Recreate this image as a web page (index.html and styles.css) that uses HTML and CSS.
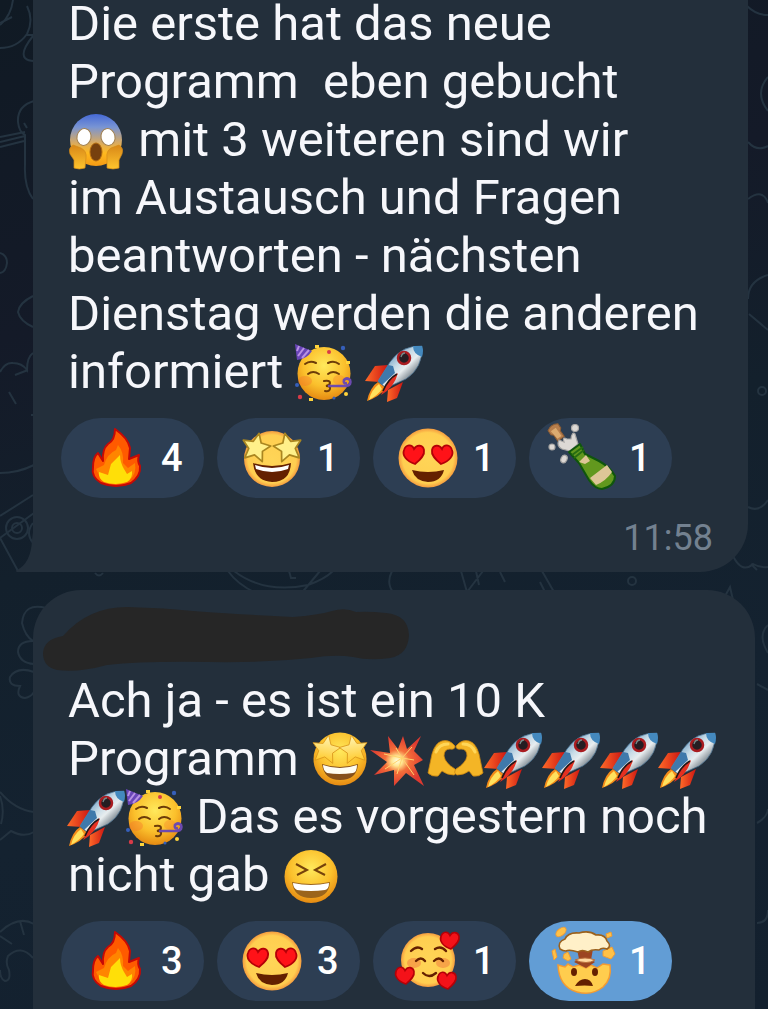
FILE: index.html
```html
<!DOCTYPE html>
<html lang="de">
<head>
<meta charset="utf-8">
<meta name="viewport" content="width=device-width, initial-scale=1">
<title>Chat</title>
<link rel="stylesheet" href="styles.css">
</head>
<body>
<svg class="sprite" aria-hidden="true">
  <defs>
    <radialGradient id="gold" cx=".5" cy=".35" r=".65"><stop offset="0" stop-color="#ffe95c"/><stop offset=".6" stop-color="#fbc02c"/><stop offset="1" stop-color="#e58a12"/></radialGradient>
    <linearGradient id="fear" x2="0" y2="1"><stop offset="0" stop-color="#4569d6"/><stop offset=".25" stop-color="#7894d4"/><stop offset=".55" stop-color="#d8aa62"/><stop offset=".75" stop-color="#ffb91f"/><stop offset="1" stop-color="#f49a14"/></linearGradient>
    <linearGradient id="hand" x2="0" y2="1"><stop offset="0" stop-color="#d88718"/><stop offset="1" stop-color="#ffc52d"/></linearGradient>
    <linearGradient id="hull" x1=".15" y1=".2" x2=".75" y2=".8"><stop offset="0" stop-color="#528bb8"/><stop offset=".45" stop-color="#c9dce7"/><stop offset=".65" stop-color="#e8edef"/><stop offset="1" stop-color="#65727c"/></linearGradient>
    <linearGradient id="fin" x2="1"><stop offset="0" stop-color="#ff6b28"/><stop offset="1" stop-color="#cc1612"/></linearGradient>
    <radialGradient id="boom"><stop offset="0" stop-color="#fffde0"/><stop offset=".2" stop-color="#ffe590"/><stop offset=".45" stop-color="#f4703a"/><stop offset="1" stop-color="#dd3930"/></radialGradient>
    <radialGradient id="flat"><stop offset="0" stop-color="#ffd557"/><stop offset=".86" stop-color="#ffce50"/><stop offset="1" stop-color="#f49b3f"/></radialGradient>
    <linearGradient id="stars" x2="0" y2="1"><stop offset="0" stop-color="#fff6b8"/><stop offset="1" stop-color="#ffc928"/></linearGradient>
    <path id="star" d="M0-15 4-6 14-5 7 2 9 12 0 7-9 12-7 2-14-5-4-6Z"/>
    <path id="heart" d="M1 10C-8 7-12 1-10-4-8-10-2-10 0-5 3-10 9-9 10-4 11 1 7 5 1 10Z"/>
  </defs>

  <symbol id="scream" viewBox="0 0 58 56">
    <circle cx="28" cy="27" r="26" fill="url(#fear)"/>
    <g fill="#fff" stroke="#a2814f"><ellipse cx="16" cy="24" rx="7" ry="8.5" transform="rotate(12 16 24)"/><ellipse cx="40" cy="24" rx="7" ry="8.5" transform="rotate(-12 40 24)"/></g>
    <ellipse cx="28" cy="39" rx="6" ry="9" fill="#76400e" stroke="#b26b11"/>
    <path d="M5 32Q0 35 2 41L6 47 6 55Q11 57 17 55L18 45Q19 38 13 35ZM51 32Q56 35 54 41L51 47 51 55Q45 57 39 55L39 45Q38 38 43 35Z" fill="url(#hand)" stroke="#d28a18" stroke-width=".7"/>
  </symbol>

  <symbol id="party" viewBox="0 0 58 56">
    <circle cx="29" cy="28.5" r="26.5" fill="url(#gold)"/>
    <ellipse cx="10" cy="36" rx="7" ry="5" fill="#f4772d" opacity=".4"/><ellipse cx="44" cy="35" rx="6" ry="5" fill="#f4772d" opacity=".3"/>
    <path d="M0-1 17 6Q12 14 2 15Z" fill="#6945b8"/><path d="M4 1 2 6M9 3 3 11M14 5 7 13" stroke="#b790e4" stroke-width="2"/>
    <g fill="none" stroke="#6d3c08" stroke-width="2" stroke-linecap="round"><path d="M10 19q5-4 11-1M33 18q6-3 11 1M13 29q5-4 11 0M33 29q5-4 11 0M29 36q6-1 6 2 0 2-4 3 5 0 4 3-1 3-5 2"/></g>
    <path d="M33 41 51 41Q57 40 55 35 52 32 49 35 48 39 52 38" fill="none" stroke="#6d4ab0" stroke-width="2.7"/>
    <g fill="#d83b48"><circle cx="34" cy="7" r="2"/><circle cx="5" cy="52" r="2.2"/></g><g fill="#365fba"><circle cx="48" cy="3" r="2.2"/><circle cx="2" cy="40" r="2"/><circle cx="39" cy="53" r="1.5"/></g><g fill="#ffd43b"><path d="M51 16h4v3h-4zM14 53h4v3h-4zM20 0h4v3h-4z"/><circle cx="51" cy="49" r="2"/></g>
  </symbol>

  <symbol id="rocket" viewBox="0 0 58 56">
    <path d="M22 20 9 21-1 36 14 37Z" fill="url(#fin)"/><path d="M22 45 37 37 31 53 21 57Z" fill="url(#fin)"/>
    <path d="M12 37Q4 42 1 56 13 52 20 43Z" fill="#f58b18"/><path d="M13 39Q5 45 3 55 12 50 16 44Z" fill="#ffe15d"/>
    <path d="M56 1Q36 0 24 17L12 36 20 43 40 34Q57 23 56 1Z" fill="url(#hull)" stroke="#426b8c" stroke-width=".7"/>
    <path d="M47 1Q47 9 56 12 58 6 56 1Z" fill="#4489be"/><path d="M22 20 12 36 16 40 29 28 27 21Z" fill="#3f79ab"/>
    <circle cx="38" cy="13" r="6" fill="#241d22" stroke="#a91c20" stroke-width="2.5"/><path d="M35 12q1-4 4-4" fill="none" stroke="#788" stroke-width="1.3"/>
    <path d="M32 28Q22 34 15 50 28 43 32 28Z" fill="#e53020"/><path d="M31 29Q22 34 17 46" fill="none" stroke="#241718" stroke-width="1.7"/>
  </symbol>

  <symbol id="starry" viewBox="0 0 58 56">
    <circle cx="29" cy="27" r="26.5" fill="url(#gold)"/><g fill="url(#stars)" stroke="#d9961b" stroke-width=".8"><use href="#star" transform="translate(15 18) rotate(10)"/><use href="#star" transform="translate(43 18) rotate(-10)"/></g>
    <path d="M11 32Q29 38 47 32 46 48 29 48 13 48 11 32Z" fill="#86501a"/><path d="M12 33Q29 39 46 33 46 40 42 41 28 43 16 41 12 38 12 33Z" fill="#fffdf2"/>
  </symbol>

  <symbol id="collision" viewBox="0 0 58 56"><path d="M19 4 29 17 34 4 38 17 52 4 45 19 54 28 45 33 55 54 37 41 25 54 25 38 5 43 18 30 1 18 21 21Z" fill="url(#boom)"/><path d="M33 26 27 16M33 26 43 15M33 26 45 28M33 26 45 43M33 26 28 42M33 26 16 37M33 26 15 22" stroke="#ffd36d"/></symbol>

  <symbol id="hands" viewBox="0 0 58 56">
    <g id="halfhand"><path d="M1 41 5 22Q8 11 15 9 22 7 28 14 28 18 23 17 17 17 17 24 18 31 28 37 31 41 27 43 20 43 15 39L11 44Q5 45 1 41Z" fill="#f4b526" stroke="#c98512" stroke-width=".8"/><path d="M9 20Q12 12 21 12" fill="none" stroke="#ffd658" stroke-width="3" stroke-linecap="round"/></g>
    <use href="#halfhand" transform="translate(57 0) scale(-1 1)"/>
  </symbol>

  <symbol id="laugh" viewBox="0 0 58 56"><circle cx="29" cy="28.5" r="26.5" fill="url(#gold)"/><path d="M14 16 25 22 15 27M44 16 33 22 43 27" fill="none" stroke="#76420b" stroke-width="2"/><path d="M10 34Q29 38 48 34 47 50 29 50 12 50 10 34Z" fill="#9b641b"/><path d="M11 35Q29 39 47 35 47 41 43 42 29 44 15 42 11 40 11 35Z" fill="#fff"/></symbol>

  <symbol id="fire" viewBox="0 0 64 64"><path d="M33 3Q46 12 48 22L47 33 57 29Q55 35 58 40 59 50 49 57 34 63 19 57 9 51 11 41 11 31 16 27L21 35Q20 23 26 18 33 14 33 3Z" fill="#ff5a00" stroke="#c60905" stroke-width="2" stroke-linejoin="round"/><path d="M36 19Q42 26 41 37L46 42 53 37Q55 48 47 55 32 60 20 55L14 43 22 39Q25 28 34 24Z" fill="#ff8500"/><path d="M38 29Q38 36 42 43L45 48 50 45Q51 52 45 56 33 60 22 56 16 52 17 46L26 49 29 38Z" fill="#ffdf08"/></symbol>

  <symbol id="starface" viewBox="0 0 64 64"><circle cx="34" cy="33" r="28" fill="url(#flat)"/><g fill="#fff08a" stroke="#aa8620" stroke-width="1.7" stroke-linejoin="round"><use href="#star" transform="translate(18 22) rotate(12)"/><use href="#star" transform="translate(50 22) rotate(-12)"/></g><path d="M15 37Q34 43 53 37 52 56 34 56 17 55 15 37Z" fill="#642000"/><path d="M17 39Q34 45 51 39L50 43Q34 49 18 43Z" fill="#fff"/></symbol>

  <symbol id="hearteyes" viewBox="0 0 64 64"><circle cx="34" cy="32" r="29.5" fill="url(#flat)"/><g fill="#ff1218" stroke="#b40007" stroke-width="1.8"><use href="#heart" x="20" y="28"/><use href="#heart" transform="translate(48 28) scale(-1 1)"/></g><path d="M18 44Q34 48 50 44 47 56 34 56 21 55 18 44Z" fill="#642000"/></symbol>

  <symbol id="bottle" viewBox="0 0 64 64">
    <g transform="rotate(-35 7 7)"><path d="M1 0Q7-4 13 0V5L11 7V14H3V7L1 5Z" fill="#b77e4d" stroke="#8d5e35"/><path d="M3 2H9V12H4Z" fill="#dcab70"/></g>
    <g fill="#ddd9d5" stroke="#a9a7a5" stroke-width="1.2"><path d="M9 14Q6 20 12 23L20 25 28 18 25 8Q22 5 21 13L17 13Q12 10 14 16Z"/><circle cx="25" cy="2" r="3.5"/><circle cx="2" cy="21" r="3"/><ellipse cx="14" cy="33" rx="3" ry="4" transform="rotate(25 14 33)"/></g>
    <path d="M19 26 30 18 35 28 49 35Q60 41 65 50 65 60 52 63 45 63 39 54L29 37Z" fill="#62981e" stroke="#0f560c" stroke-width="2" stroke-linejoin="round"/><path d="M22 29 33 21M24 32 34 24" stroke="#276c12" stroke-width="2"/><path d="M29 36 36 29 40 35 35 38ZM40 52 57 39 62 46Q56 55 46 59Z" fill="#dec697"/>
  </symbol>

  <symbol id="lovely" viewBox="0 0 64 64"><circle cx="34" cy="31" r="27" fill="url(#flat)"/><ellipse cx="20" cy="34" rx="7" ry="5" fill="#f0783d" opacity=".5"/><ellipse cx="49" cy="34" rx="7" ry="5" fill="#f0783d" opacity=".5"/><path d="M17 22q6-6 11-2M41 20q6-4 11 2M22 32q5-5 9 0M40 32q5-5 9 0M29 44q6 6 13 0" fill="none" stroke="#642000" stroke-width="2.4" stroke-linecap="round"/><g fill="#f41219" stroke="#b40007" stroke-width="1.8"><use href="#heart" transform="translate(56 11) scale(.9)"/><use href="#heart" transform="translate(11 46) scale(.9)"/><use href="#heart" transform="translate(53 51) scale(.9)"/></g></symbol>

  <symbol id="mindblown" viewBox="0 0 64 64"><path d="M8 36 15 38 18 35 23 38 29 36 36 39 41 36 47 39 53 35 60 36Q62 50 53 58 42 67 27 63 9 58 8 36Z" fill="#ffcd4e" stroke="#f29b34" stroke-width="1.5"/><path d="M27 20H43L41 31 45 33 36 39 24 33 29 30Z" fill="#9c4521"/><path d="M25 31q10-4 20 0-8 5-20 0Z" fill="#ffd8a0" stroke="#ba703c"/><g fill="#ffc147" stroke="#ef9d35"><ellipse cx="11" cy="3" rx="6" ry="3.5" transform="rotate(-40 11 3)"/><path d="M56 5 61 3 62 7 57 9ZM2 22 5 20 7 28 4 31ZM14 25 18 23 21 30 18 32 13 29ZM53 22 62 18 65 25 61 30 53 27Z"/></g><path d="M10 20Q7 13 15 10 18 3 29 4 39 1 46 6 55 5 57 12 62 17 57 20 52 18 49 21 42 20 38 23 32 20 28 23 19 20 16 22 13 22 10 20Z" fill="#fff0c8" stroke="#9b611c" stroke-width="1.6"/><g fill="#642000"><ellipse cx="24" cy="43" rx="3" ry="4"/><ellipse cx="45" cy="43" rx="3" ry="4"/><path d="M25 57Q29 50 35 50 41 50 43 57 35 56 25 57Z"/></g></symbol>
</svg>

<svg class="wallpaper" viewBox="0 0 768 1009" preserveAspectRatio="xMidYMin slice" aria-hidden="true">
  <path d="M13 0Q11 16 0 25M0 23 12 17M27 6Q34 20 27 34 17 48 0 48M26 35H34M33 36Q20 52 25 58 28 61 34 61M34 101Q17 106 18 122 19 132 25 135V165Q24 187 33 199M24 123 27 128M0 137 25 132M0 142 25 136M0 147 24 141M0 253Q7 255 7 263 6 272 0 273M33 296Q19 303 18 312 20 321 33 327M0 372Q5 362 13 363 22 363 27 370 27 357 33 353M15 375 28 370M9 392 16 404M31 415H34M0 473Q18 473 34 465M0 516 33 495M0 538 18 571M0 538 34 513M33 523Q25 533 33 543M95 573Q99 578 103 573M228 571Q240 588 266 597M234 571Q264 594 308 585 325 579 333 571M289 571 291 578 296 578M300 595 320 571M392 571Q386 583 393 592M461 571 467 592 483 571M476 571 479 585M500 572 505 582M540 582 545 592M542 571 554 592M724 598 730 587 733 600"/>
  <circle cx="17" cy="528" r="11"/><circle cx="17" cy="528" r="5"/><circle cx="632" cy="581" r="4"/>
  <path d="M46 608Q24 602 22 623 25 636 33 641 18 641 18 652 20 663 34 664M34 672Q17 666 10 677 8 686 20 686 15 697 25 698 31 697 34 692M0 792Q15 810 34 812M0 796Q5 810 1 824M0 840 11 831Q24 838 34 832M0 932Q18 915 34 924M20 921 24 935M0 936 12 944M33 958Q21 944 8 956 5 963 9 970 11 981 5 981 0 979 0 970M747 6Q756 15 768 15M768 77Q754 93 768 111M748 142Q757 152 768 146M748 199Q763 188 768 203M768 275Q748 281 748 299M749 314 768 330M748 507Q759 513 768 500M733 556Q742 574 753 564 760 568 768 567M751 564 757 570M768 625Q757 635 768 653M757 684 768 690M757 823Q767 818 768 809M757 923Q768 923 768 910"/>
  <circle cx="762" cy="391" r="4"/>
</svg>

<main class="chat">
  <article class="bubble bubble-first">
    <svg class="tail" viewBox="0 0 17 40" aria-hidden="true"><path d="M17 0V40H1Q-1 39 1 38 15 31 16 8Z" fill="#232f3b"/></svg>
    <p class="message">Die erste hat das neue<br>Programm&nbsp; eben gebucht<br><svg class="emoji" role="img" aria-label="Schrei"><use href="#scream"/></svg> mit 3 weiteren sind wir<br>im Austausch und Fragen<br>beantworten - nächsten<br>Dienstag werden die anderen<br>informiert <svg class="emoji" role="img" aria-label="Party"><use href="#party"/></svg> <svg class="emoji" role="img" aria-label="Rakete"><use href="#rocket"/></svg></p>
    <div class="reactions">
      <button class="reaction" type="button"><svg class="icon" role="img" aria-label="Feuer"><use href="#fire"/></svg><span>4</span></button>
      <button class="reaction" type="button"><svg class="icon" role="img" aria-label="Sternenaugen"><use href="#starface"/></svg><span>1</span></button>
      <button class="reaction" type="button"><svg class="icon" role="img" aria-label="Herzaugen"><use href="#hearteyes"/></svg><span>1</span></button>
      <button class="reaction" type="button"><svg class="icon" role="img" aria-label="Sekt"><use href="#bottle"/></svg><span>1</span></button>
    </div>
    <time class="time" datetime="11:58">11:58</time>
  </article>

  <article class="bubble bubble-second">
    <svg class="redaction" viewBox="0 0 366 64" aria-hidden="true"><path d="M20 29Q45 0 84 0 124 1 150 4 205 8 250 10 275 8 289 4 302 0 313 5 325 4 343 6 365 8 366 28 365 48 347 51 326 54 310 50 292 47 268 51 220 56 165 55 100 54 64 58 35 66 14 63 0 60 0 46 1 32 20 29Z" fill="#262626"/></svg>
    <p class="message">Ach ja - es ist ein 10 K<br>Programm <svg class="emoji" role="img" aria-label="Sternenaugen"><use href="#starry"/></svg><svg class="emoji" role="img" aria-label="Explosion"><use href="#collision"/></svg><svg class="emoji" role="img" aria-label="Herzhände"><use href="#hands"/></svg><svg class="emoji" role="img" aria-label="Rakete"><use href="#rocket"/></svg><svg class="emoji" role="img" aria-label="Rakete"><use href="#rocket"/></svg><svg class="emoji" role="img" aria-label="Rakete"><use href="#rocket"/></svg><svg class="emoji" role="img" aria-label="Rakete"><use href="#rocket"/></svg><br><svg class="emoji" role="img" aria-label="Rakete"><use href="#rocket"/></svg><svg class="emoji" role="img" aria-label="Party"><use href="#party"/></svg> Das es vorgestern noch<br>nicht gab <svg class="emoji" role="img" aria-label="Lachen"><use href="#laugh"/></svg></p>
    <div class="reactions">
      <button class="reaction" type="button"><svg class="icon" role="img" aria-label="Feuer"><use href="#fire"/></svg><span>3</span></button>
      <button class="reaction" type="button"><svg class="icon" role="img" aria-label="Herzaugen"><use href="#hearteyes"/></svg><span>3</span></button>
      <button class="reaction" type="button"><svg class="icon" role="img" aria-label="Lächeln mit Herzen"><use href="#lovely"/></svg><span>1</span></button>
      <button class="reaction reaction-chosen" type="button" aria-pressed="true"><svg class="icon" role="img" aria-label="Explodierender Kopf"><use href="#mindblown"/></svg><span>1</span></button>
    </div>
  </article>
</main>
</body>
</html>
```
FILE: styles.css
```css
* {
  box-sizing: border-box;
}

body {
  position: relative;
  margin: 0;
  min-height: 100vh;
  overflow-x: hidden;
  background: linear-gradient(165deg, #101a24 0%, #141a28 28%, #13202c 48%, #142230 70%, #13202e 100%);
  color: #f6f7fb;
  font-family: Roboto, "Noto Sans", sans-serif;
}

.sprite {
  position: absolute;
  width: 0;
  height: 0;
}

symbol {
  overflow: visible;
}

.wallpaper {
  position: absolute;
  inset: 0;
  width: 100%;
  height: 100%;
  fill: none;
  stroke: #243340;
  stroke-width: 2;
}

.chat {
  position: relative;
  display: flex;
  flex-direction: column;
  gap: 18px;
  min-height: 100vh;
  padding: 0 13px 0 33px;
}

.bubble {
  position: relative;
  display: flex;
  flex-direction: column;
  background: #232f3b;
}

.bubble-first {
  margin-right: 7px;
  padding-bottom: 12px;
  border-bottom-right-radius: 48px;
}

.bubble-second {
  flex-grow: 1;
  padding: 17px 0 8px;
  border-radius: 48px 48px 0 0;
}

.tail {
  position: absolute;
  bottom: 0;
  right: 100%;
  width: 17px;
  height: 40px;
}

.message {
  margin: 0 0 17px 35px;
  padding-top: 1px;
  font-size: 49px;
  line-height: 58px;
}

.bubble-first .message {
  margin-top: -6px;
}

.emoji {
  width: 58px;
  height: 56px;
  vertical-align: -13px;
  overflow: visible;
}

.redaction {
  width: 366px;
  height: 64px;
  margin-left: 10px;
}

.reactions {
  display: flex;
  flex-wrap: wrap;
  gap: 13px;
  padding-left: 28px;
}

.reaction {
  display: flex;
  align-items: center;
  gap: 15px;
  min-width: 143px;
  height: 80px;
  padding: 0 21px;
  border: 0;
  border-radius: 40px;
  background: #2d3e53;
  color: #fff;
  font: 500 38px/44px Roboto, "Noto Sans", sans-serif;
}

.reaction-chosen {
  background: #629dd5;
}

.icon {
  flex: none;
  width: 64px;
  height: 64px;
  overflow: visible;
}

.time {
  align-self: flex-end;
  margin: 18px 35px 0 0;
  color: #738190;
  font-size: 36px;
  line-height: 44px;
}
```
